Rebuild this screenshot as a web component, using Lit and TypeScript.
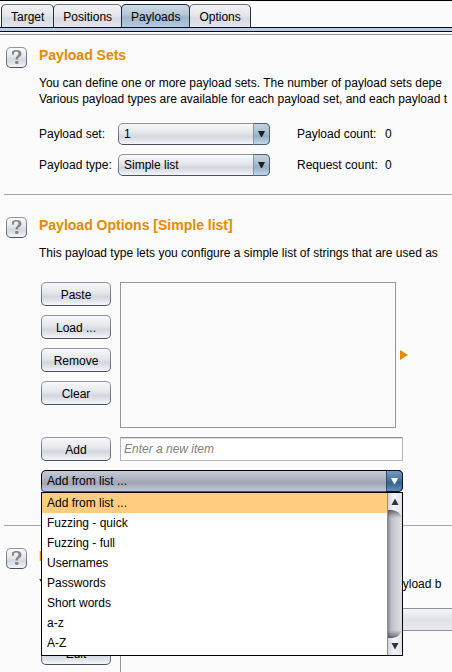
import { LitElement, html, css, svg } from "lit";
import { customElement, property, state } from "lit/decorators.js";
import { classMap } from "lit/directives/class-map.js";

const controls = css`
  :host {
    box-sizing: border-box;
  }
  *,
  *::before,
  *::after {
    box-sizing: border-box;
  }
  .control {
    margin: 0;
    border: 1px solid transparent;
    border-radius: 5px;
    color: #000;
    font: inherit;
    background:
      linear-gradient(#f9f9fb, #e4e6eb 45%, #d3d6de 62%, #e2e5ec 82%, #f3f6fb) padding-box,
      linear-gradient(#92959d, #747983 60%, #484d57) border-box;
  }
`;

@customElement("help-button")
export class HelpButton extends LitElement {
  static styles = [
    controls,
    css`
      :host {
        display: block;
      }
      .help {
        display: grid;
        place-items: center;
        width: 21px;
        height: 21px;
        padding: 0;
      }
    `,
  ];

  render() {
    return html`<button class="control help" aria-label="Help">
      <svg width="19" height="19" viewBox="0 0 19 19" fill="none" aria-hidden="true">
        <path
          d="M5 6.8V3.4C6.4 2.5 8 2.1 9.7 2.1C12.8 2.1 14.5 3.5 14.5 5.8C14.5 7.6 13.4 8.5 12.2 9.3C11.2 10 10.9 10.5 10.9 11.6H8.6C8.5 9.8 9 8.8 10.1 7.9C11 7.1 11.5 6.6 11.5 5.6C11.5 4.3 10.6 3.5 9.2 3.5C8.3 3.5 7.6 3.8 7.2 4.3L6.8 6.8Z"
          fill="#868686"
        />
        <rect x="8.1" y="12.9" width="3.4" height="3" rx="1.2" fill="#868686" />
      </svg>
    </button>`;
  }
}

@customElement("combo-box")
export class ComboBox extends LitElement {
  @property() label = "";
  @property({ type: Array }) options: string[] = [];
  @property({ type: Boolean, reflect: true }) open = false;
  @state() private selected = 0;

  static styles = [
    controls,
    css`
      :host {
        display: block;
        position: relative;
      }
      .field {
        display: grid;
      }
      .field > * {
        grid-area: 1 / 1;
      }
      .select {
        appearance: none;
        width: 100%;
        height: 22px;
        padding: 0 22px 0 5px;
        line-height: 20px;
        outline: none;
      }
      .arrow {
        display: grid;
        place-items: center;
        justify-self: end;
        width: 17px;
        height: 22px;
        border: 1px solid #49617a;
        border-left-color: #8096ab;
        border-radius: 0 5px 5px 0;
        background: linear-gradient(#c5d3df, #a9bccc 45%, #96adc1 60%, #c0d7ec);
        color: #1c1f22;
        pointer-events: none;
      }
      .open .select {
        border-bottom-left-radius: 4px;
        background:
          linear-gradient(#c6cad6, #aeb3c1 40%, #a0a6b5 60%, #c2c8d8) padding-box,
          linear-gradient(#000, #000 60%, #4a5361) border-box;
      }
      .open .arrow {
        border-color: #05101c;
        border-left-color: #2c4d6e;
        background: linear-gradient(#7a9cbe, #46729c 45%, #33628c 60%, #5f91c1);
        color: #fff;
      }
      .popup {
        position: absolute;
        z-index: 1;
        top: 100%;
        left: 0;
        right: 0;
        display: flex;
        border: 1px solid #000;
        background: #fff;
      }
      .items {
        flex: 1;
        margin: 0;
        padding: 0 0 2px;
        list-style: none;
      }
      .item {
        padding: 0 5px;
        line-height: 20px;
      }
      .active {
        background: #ffcc80;
      }
      .scroll {
        display: flex;
        flex-direction: column;
        width: 15px;
        border-left: 1px solid #8a8d94;
        background: linear-gradient(90deg, #87898f, #b9bcc4 20%, #cfd0d6 55%, #dddee2);
      }
      .step {
        display: block;
        width: 14px;
        height: 25px;
      }
      .track {
        flex: 1;
      }
    `,
  ];

  private press(e: Event) {
    if (!this.classList.contains("listed")) return;
    e.preventDefault();
    this.open = !this.open;
  }

  private choose(index: number) {
    this.selected = index;
    this.open = false;
  }

  private step(up: boolean) {
    return html`<svg class="step" viewBox="0 0 14 25" aria-hidden="true">
      <defs>
        <linearGradient id="cap" x1="0" x2="1" y1="0" y2="0">
          <stop offset="0" stop-color="#d3d5da" />
          <stop offset="0.4" stop-color="#f2f3f5" />
          <stop offset="1" stop-color="#e2e4e8" />
        </linearGradient>
        <linearGradient id="shade" x1="0" x2="0" y1="0" y2="1">
          <stop offset="0.6" stop-color="#2d2f33" stop-opacity="0.9" />
          <stop offset="1" stop-color="#55585e" stop-opacity="0" />
        </linearGradient>
      </defs>
      ${up
        ? svg`<path d="M0 0H14V25H0Z" fill="url(#shade)" />
            <path d="M0 0H14V25Q12 18 4 17H0Z" fill="url(#cap)" />
            <path d="M7 5.5L10.5 12H3.5Z" fill="#303236" />`
        : svg`<g transform="matrix(1 0 0 -1 0 25)">
            <path d="M0 0H14V25H0Z" fill="url(#shade)" />
            <path d="M0 0H14V25Q12 18 4 17H0Z" fill="url(#cap)" />
            <path d="M7 5.5L10.5 12H3.5Z" fill="#303236" />
          </g>`}
    </svg>`;
  }

  render() {
    return html`
      <div class=${classMap({ field: true, open: this.open })}>
        <select
          class="control select"
          aria-label=${this.label}
          @mousedown=${this.press}
          @change=${(e: Event) => (this.selected = (e.target as HTMLSelectElement).selectedIndex)}
        >
          ${this.options.map((o, i) => html`<option ?selected=${i === this.selected}>${o}</option>`)}
        </select>
        <span class="arrow">
          <svg width="7" height="6" viewBox="0 0 7 6" fill="currentColor" aria-hidden="true">
            <path d="M0 0H7L4 6H3Z" />
          </svg>
        </span>
      </div>
      ${this.open
        ? html`<div class="popup">
            <ul class="items" role="listbox" aria-label=${this.label}>
              ${this.options.map(
                (o, i) => html`<li
                  class=${classMap({ item: true, active: i === this.selected })}
                  role="option"
                  aria-selected=${i === this.selected}
                  @click=${() => this.choose(i)}
                >
                  ${o}
                </li>`,
              )}
            </ul>
            <div class="scroll">${this.step(true)}<span class="track"></span>${this.step(false)}</div>
          </div>`
        : ""}
    `;
  }
}

@customElement("app-root")
export class AppRoot extends LitElement {
  @state() private tab = "Payloads";

  private tabs = ["Target", "Positions", "Payloads", "Options"];
  private lists = [
    "Add from list ...",
    "Fuzzing - quick",
    "Fuzzing - full",
    "Usernames",
    "Passwords",
    "Short words",
    "a-z",
    "A-Z",
  ];

  static styles = [
    controls,
    css`
      :host {
        display: flex;
        flex-direction: column;
        height: 100vh;
        overflow: hidden;
        border-top: 1px solid #000;
        background: #fbfbfb;
        color: #000;
        font: 12px/16px "Liberation Sans", Arial, sans-serif;
      }
      .tabs {
        display: flex;
        flex: none;
        padding: 3px 1px 0;
        border-bottom: 1px solid #05081a;
      }
      .tab {
        height: 23px;
        margin: 0 -1px 0 0;
        padding: 1px 9px 0;
        border: 1px solid #2b3038;
        border-top-color: #6c7078;
        border-bottom: 0;
        border-radius: 5px 5px 0 0;
        background: linear-gradient(#f4f4f7, #e3e4e9 50%, #d7d9e0 60%, #e4e6ec);
        color: #000;
        font: inherit;
      }
      .current {
        border-color: #1a2a3c;
        background: linear-gradient(#cfdae5, #b4c6d6 45%, #9fb6ca 55%, #b3c9df);
      }
      .band {
        flex: none;
        height: 7px;
        border-bottom: 1px solid #8c97a3;
        background: linear-gradient(#b8cce4 3px, #05081a 3px 4px, #fbfbfb 4px);
      }
      .section {
        display: grid;
        flex: none;
        grid-template-columns: 21px minmax(0, 1fr);
        gap: 0 12px;
        margin-left: 4px;
        padding: 22px 0 18px 2px;
        border-top: 1px solid #a3a7b0;
      }
      .section.first {
        padding-top: 12px;
        border-top: 0;
      }
      .section.last {
        flex: 1 0 0;
      }
      .title {
        margin: 0;
        color: #e58900;
        font-size: 14px;
        font-weight: bold;
        line-height: 17px;
        white-space: nowrap;
      }
      .text {
        margin: 11px 0 0;
        white-space: pre;
      }
      .settings {
        display: grid;
        grid-template-columns: 79px 152px 88px 1fr;
        row-gap: 9px;
        align-items: center;
        margin-top: 16px;
        white-space: nowrap;
      }
      .count {
        padding-left: 27px;
      }
      .value {
        padding-left: 27px;
      }
      .editor {
        display: grid;
        grid-template-columns: 70px 276px auto;
        gap: 9px;
        margin: 21px 0 0 2px;
      }
      .stack {
        display: flex;
        flex-direction: column;
        gap: 9px;
      }
      .button {
        width: 70px;
        height: 24px;
        padding: 1px 0 0;
      }
      .list {
        height: 146px;
        border: 1px solid #9297a1;
      }
      .marker {
        align-self: center;
        margin-left: -5px;
      }
      .entry {
        display: grid;
        grid-template-columns: 70px 283px;
        gap: 9px;
        margin: 9px 0 0 2px;
      }
      .input {
        width: 100%;
        height: 24px;
        padding: 0 3px;
        border: 1px solid #b5b6ba;
        border-top-color: #8d8e92;
        border-radius: 0;
        outline: none;
        background: #fff;
        box-shadow: inset 0 1px #dcdde0;
        color: #000;
        font: inherit;
      }
      .input::placeholder {
        color: #808080;
        font-style: italic;
      }
      .picker {
        width: 362px;
        margin: 9px 0 15px 2px;
      }
      .rules {
        display: grid;
        grid-template-columns: 70px minmax(0, 1fr);
        gap: 9px;
        height: 100%;
        margin: 16px 0 0 2px;
      }
      .table {
        width: 100%;
        height: 100%;
        border-collapse: collapse;
        border-left: 1px solid #9297a1;
      }
      .head {
        height: 22px;
        padding: 0;
        border: 1px solid #8f939c;
        border-right: 0;
        background: linear-gradient(#f3f3f6, #dfe1e6 50%, #e9ebf1);
      }
      .cell {
        padding: 0;
      }
    `,
  ];

  render() {
    return html`
      <nav class="tabs" role="tablist">
        ${this.tabs.map(
          (t) => html`<button
            class=${classMap({ tab: true, current: t === this.tab })}
            role="tab"
            aria-selected=${t === this.tab}
            @click=${() => (this.tab = t)}
          >
            ${t}
          </button>`,
        )}
      </nav>
      <div class="band"></div>

      <section class="section first">
        <help-button></help-button>
        <div>
          <h2 class="title">Payload Sets</h2>
          <p class="text">You can define one or more payload sets. The number of payload sets depe
Various payload types are available for each payload set, and each payload t</p>
          <div class="settings">
            <span>Payload set:</span>
            <combo-box label="Payload set" .options=${["1"]}></combo-box>
            <span class="count">Payload count:</span>
            <span class="value">0</span>
            <span>Payload type:</span>
            <combo-box label="Payload type" .options=${["Simple list"]}></combo-box>
            <span class="count">Request count:</span>
            <span class="value">0</span>
          </div>
        </div>
      </section>

      <section class="section">
        <help-button></help-button>
        <div>
          <h2 class="title">Payload Options [Simple list]</h2>
          <p class="text">This payload type lets you configure a simple list of strings that are used as</p>
          <div class="editor">
            <div class="stack">
              ${["Paste", "Load ...", "Remove", "Clear"].map((b) => html`<button class="control button">${b}</button>`)}
            </div>
            <div class="list" role="listbox" aria-label="Payload items"></div>
            <svg class="marker" width="8" height="10" viewBox="0 0 8 10" aria-hidden="true">
              <path d="M0 0L8 5L0 10Z" fill="#e58900" />
            </svg>
          </div>
          <div class="entry">
            <button class="control button">Add</button>
            <input class="input" aria-label="New item" placeholder="Enter a new item" />
          </div>
          <combo-box class="picker listed" label="Add from list" open .options=${this.lists}></combo-box>
        </div>
      </section>

      <section class="section last">
        <help-button></help-button>
        <div>
          <h2 class="title">Payload Processing</h2>
          <p class="text">You can define rules to perform various processing tasks on each payload b</p>
          <div class="rules">
            <div class="stack">
              <button class="control button">Add</button>
              <button class="control button">Edit</button>
            </div>
            <table class="table" aria-label="Processing rules">
              <thead>
                <tr><th class="head"></th></tr>
              </thead>
              <tbody>
                <tr><td class="cell"></td></tr>
              </tbody>
            </table>
          </div>
        </div>
      </section>
    `;
  }
}
